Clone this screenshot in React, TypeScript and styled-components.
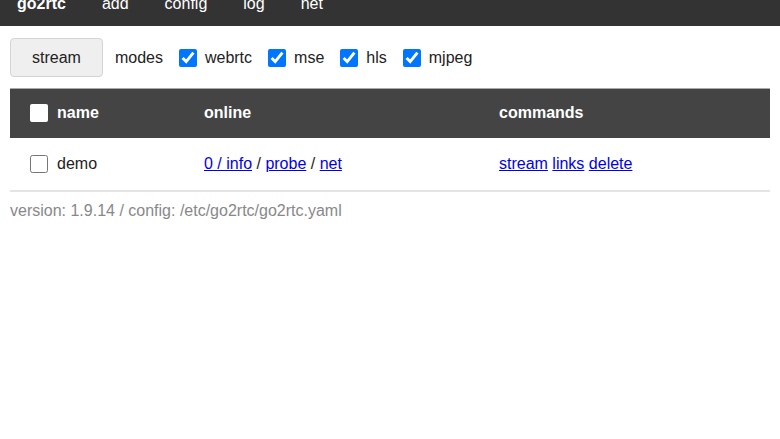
import React from 'react';
import styled, { createGlobalStyle } from 'styled-components';

const MODES = ['webrtc', 'mse', 'hls', 'mjpeg'];
const NAV = ['add', 'config', 'log', 'net'];

const App = () => {
  return (
    <>
      <GlobalStyle />
      <Nav>
        <NavLink $brand>go2rtc</NavLink>
        {NAV.map((item) => (
          <NavLink key={item}>{item}</NavLink>
        ))}
      </Nav>

      <Main>
        <Controls>
          <StreamBtn>stream</StreamBtn>
          <span>modes</span>
          {MODES.map((mode) => (
            <ModeLabel key={mode}>
              <Check type='checkbox' defaultChecked />
              {mode}
            </ModeLabel>
          ))}
        </Controls>

        <Table>
          <thead>
            <tr>
              <Th $w={174}>
                <NameCell>
                  <HeadBox />
                  name
                </NameCell>
              </Th>
              <Th $w={295}>online</Th>
              <Th>commands</Th>
            </tr>
          </thead>
          <tbody>
            <tr>
              <Td>
                <NameCell>
                  <Check type='checkbox' />
                  demo
                </NameCell>
              </Td>
              <Td>
                <Link>0 / info</Link> / <Link>probe</Link> / <Link>net</Link>
              </Td>
              <Td>
                <Link>stream</Link> <Link>links</Link> <Link>delete</Link>
              </Td>
            </tr>
          </tbody>
        </Table>

        <Footer>version: 1.9.14 / config: /etc/go2rtc/go2rtc.yaml</Footer>
      </Main>
    </>
  );
};

const GlobalStyle = createGlobalStyle`
  body {
    margin: 0;
    font-family: 'Liberation Sans', Arial, sans-serif;
    font-size: 16px;
    color: #222;
    background: #fff;
    overflow: hidden;
  }
`;

// the page is scrolled a little, so the top bar is partly out of view
const Nav = styled.nav`
  background: #333;
  margin-top: -20px;
  padding: 15px 0 13px 17px;
  display: flex;
  gap: 36px;
  line-height: 18px;
`;

const NavLink = styled.a<{ $brand?: boolean }>`
  color: #fff;
  font-weight: ${({ $brand }) => ($brand ? 'bold' : 'normal')};
  text-decoration: none;
`;

const Main = styled.main`
  padding: 12px 10px 0;
`;

const Controls = styled.div`
  display: flex;
  align-items: center;
  gap: 12px;
  margin-bottom: 11px;

  > span {
    margin-right: 4px;
  }
`;

const StreamBtn = styled.button`
  height: 39px;
  padding: 0 21px;
  font-family: inherit;
  font-size: 16px;
  color: #222;
  background: #efefef;
  border: 1px solid #d4d4d4;
  border-radius: 4px;
`;

const ModeLabel = styled.label`
  display: flex;
  align-items: center;
  gap: 8px;
  margin-right: 4px;
`;

const Check = styled.input`
  width: 18px;
  height: 18px;
  margin: 0;
  accent-color: #0075ff;
`;

const HeadBox = styled.span`
  width: 18px;
  height: 18px;
  background: #fff;
  border-radius: 2px;
  display: inline-block;
`;

const Table = styled.table`
  width: 100%;
  border-collapse: collapse;
  border-top: 1px solid #aaa;
`;

const Th = styled.th<{ $w?: number }>`
  width: ${({ $w }) => ($w ? `${$w}px` : 'auto')};
  background: #444;
  color: #fff;
  text-align: left;
  font-weight: bold;
  height: 49px;
  padding: 0 20px;
  box-sizing: border-box;
`;

const Td = styled.td`
  height: 51px;
  padding: 1px 20px 0;
  border-bottom: 2px solid #e4e4e4;
`;

const NameCell = styled.div`
  display: flex;
  align-items: center;
  gap: 9px;
`;

const Link = styled.a`
  color: #0000ee;
  text-decoration: underline;
  cursor: pointer;
`;

const Footer = styled.div`
  margin-top: 10px;
  color: #888;
`;

export default App;
